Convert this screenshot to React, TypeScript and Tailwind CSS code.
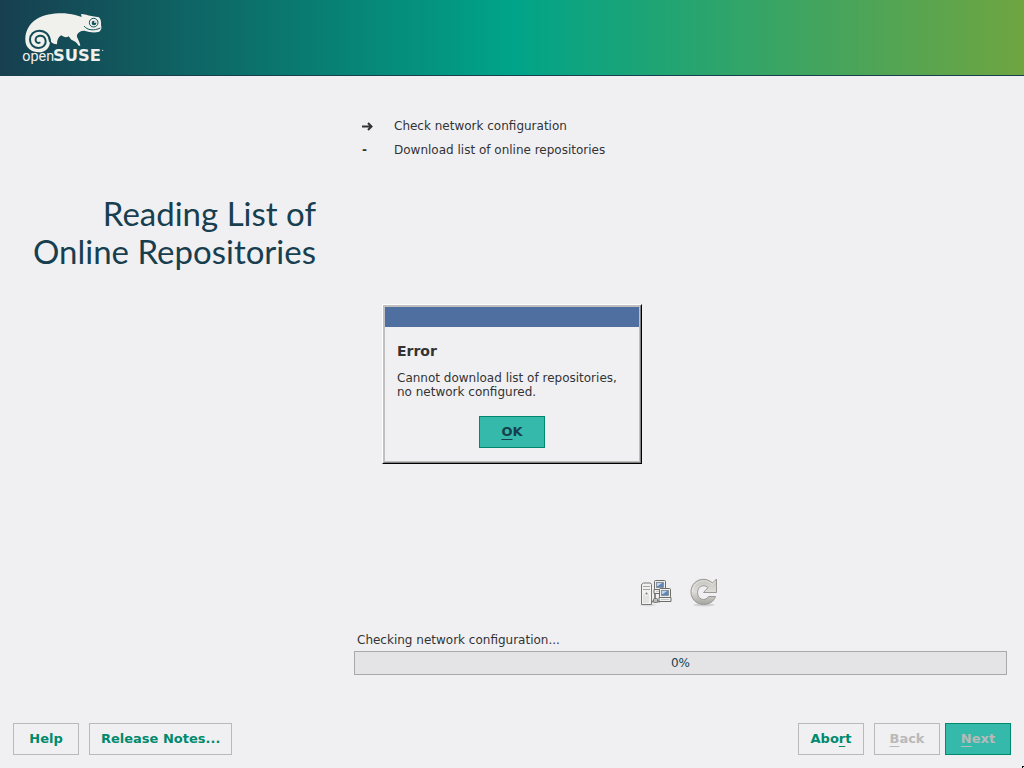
import React from "react";

const baseButton =
  "flex h-8 min-w-[66px] items-center justify-center border px-[11px] text-[13px] leading-4 font-bold";

function Mnemonic({ children }: { children: string }) {
  return <span className="underline decoration-1 underline-offset-3 [text-decoration-skip-ink:none]">{children}</span>;
}

function Logo() {
  return (
    <svg className="h-[54px] w-[84px]" viewBox="66 36 252 162" role="img" aria-label="openSUSE">
      <path
        fill="#f0f0ec"
        d="M76 120C75 96 86 72 110 57C136 42 174 38 204 41C220 43 233 46 245 51L243 42C255 42 263 46 274 48L297 52C303 58 304 66 303 76C306 83 304 91 298 95C284 99 268 97 256 93C244 91 235 97 231 105C229 113 239 123 241 137L236 137C229 125 223 123 214 119L206 109C199 114 190 111 184 106C176 110 171 119 171 133L164 132C158 130 154 126 150 122C151 143 136 157 117 157C94 157 76 143 76 120Z"
      />
      <path
        fill="none"
        stroke="#134c57"
        strokeWidth="6"
        strokeLinecap="round"
        d="M150 124C149 104 135 92 118 92C102 92 90 104 90 119C90 134 102 144 116 144C129 144 138 134 137 123C136 112 128 106 119 107C110 108 106 114 107 121C108 127 113 130 119 128"
      />
      <circle cx="281" cy="68" r="13" fill="none" stroke="#12545b" strokeWidth="3" />
      <circle cx="282" cy="69" r="7" fill="#12545b" />
      <circle cx="285" cy="66" r="3" fill="#f0f0ec" />
      <path d="M252 78C262 91 282 93 301 84" fill="none" stroke="#12545b" strokeWidth="3" />
      <g fill="#f0f0ec">
        <text x="67" y="184" fontFamily="Roboto, sans-serif" fontSize="43">open</text>
        <text x="159" y="184" fontFamily="'DejaVu Sans', sans-serif" fontWeight="700" fontSize="49">SUSE</text>
        <circle cx="308" cy="151" r="2" />
      </g>
    </svg>
  );
}

function Computer({ x, y }: { x: number; y: number }) {
  return (
    <g transform={`translate(${x} ${y})`}>
      <rect x="1.500" y=".5" width="11" height="9" rx="1" fill="#eeeeec" stroke="#6b6d69" />
      <rect x="3.500" y="2.500" width="7" height="5" fill="#5f86b8" stroke="#7d8288" strokeWidth=".7" />
      <path d="M4 3h5l-4 3H4z" fill="#c3d4e8" />
      <path d="M1 9.500H13V13.500H1z" fill="#f2f2f0" stroke="#6b6d69" />
      <path d="M3 11.500h8" stroke="#c4c4c2" />
    </g>
  );
}

function NetworkIcon() {
  return (
    <svg className="size-8" viewBox="0 0 32 32" aria-hidden="true">
      <ellipse cx="8" cy="29" rx="8" ry="1.500" fill="#000" opacity=".08" />
      <path d="M11 25.500h9M15 17v8" stroke="#8a8a88" strokeWidth="2" />
      <path d="M1.500 8.500l2-1.500h7l1 1.500v20h-10z" fill="#f2f2f0" stroke="#777975" />
      <path d="M3 10.500h7M3 13.500h7" stroke="#a5a5a2" />
      <path d="M4 18v9M6 20v7M8 18v9" stroke="#d4d4d2" />
      <circle cx="6.500" cy="17.500" r="1" fill="#777" />
      <Computer x={13} y={4} />
      <Computer x={18} y={12} />
      <rect x="13.500" y="22.500" width="4" height="4" rx="1" fill="#bbb" stroke="#777" />
    </svg>
  );
}

function RefreshIcon() {
  return (
    <svg className="size-8" viewBox="0 0 32 32" aria-hidden="true">
      <defs>
        <linearGradient id="arrow" x1="0" y1="0" x2="0" y2="1">
          <stop offset="0" stopColor="#c4c3be" />
          <stop offset=".5" stopColor="#dddcd8" />
          <stop offset="1" stopColor="#a4a39e" />
        </linearGradient>
      </defs>
      <ellipse cx="16" cy="29" rx="11" ry="1.500" fill="#000" opacity=".12" />
      <path
        d="M28.500 3V16.500H15.500L20 11.500C15 7.500 9.500 11 9.500 16.500C9.500 23.500 17 26 20.500 20.500H27.500C25.500 26 21 28.500 15.500 28.500C8.500 28.500 3 23 3 16C3 4 16.500 -.5 24.500 7Z"
        fill="url(#arrow)"
        stroke="#9a9995"
      />
      <path d="M4.500 16C4.500 6 16.500 1 24.500 8.500L27.500 5" fill="none" stroke="#fff" opacity=".45" />
    </svg>
  );
}

function Steps() {
  return (
    <ul className="flex flex-col pl-2">
      <li className="flex h-6 items-center">
        <span className="w-8 pt-px">
          <svg className="h-[9px] w-[11px]" viewBox="0 0 11 9" aria-hidden="true">
            <path d="M0 4.500H9M6 1L9.500 4.500L6 8" fill="none" stroke="#333" strokeWidth="2" />
          </svg>
        </span>
        Check network configuration
      </li>
      <li className="flex h-6 items-center">
        <span className="w-8 font-bold">-</span>
        Download list of online repositories
      </li>
    </ul>
  );
}

function ErrorDialog() {
  return (
    <div className="pointer-events-none fixed inset-0 flex items-center justify-center">
      <div
        role="alertdialog"
        aria-labelledby="error-title"
        aria-describedby="error-message"
        className="pointer-events-auto min-w-[260px] border border-t-white border-r-black border-b-black border-l-white bg-[#f0f0f3]"
      >
        <div className="border border-t-[#c0c0c0] border-r-[#808080] border-b-[#808080] border-l-[#c0c0c0]">
          <div className="border border-[#c0c0c0]">
            <div className="h-5 bg-[#4f6fa0]" />
            <div className="flex flex-col px-3 pt-4 pb-[13px]">
              <h2 id="error-title" className="text-[14px] leading-4 font-bold">Error</h2>
              <p id="error-message" className="mt-3 leading-[14px]">
                Cannot download list of repositories,
                <br />
                no network configured.
              </p>
              <button type="button" className={`${baseButton} mt-[17px] self-center border-[#008a6d] bg-[#35b9ab] text-[#173f4f]`}>
                <span><Mnemonic>O</Mnemonic>K</span>
              </button>
            </div>
          </div>
        </div>
      </div>
    </div>
  );
}

export default function App() {
  return (
    <div className="flex min-h-screen flex-col bg-[#f0f0f3] font-['DejaVu_Sans',sans-serif] text-[12px] text-[#333333]">
      <header className="flex h-19 items-start border-b border-[#173f4f] bg-[linear-gradient(to_right,#173f4f,#00a489_50%,#6fa541)] pt-3 pl-[22px]">
        <Logo />
      </header>
      <main className="flex flex-1 pr-[17px]">
        <div className="w-[354px] shrink-0 pt-[118px] pr-[38px] text-right">
          <h1 className="font-['Lato',sans-serif] text-[33px] leading-[38px] text-[#173f4f]">
            Reading List of
            <br />
            Online Repositories
          </h1>
        </div>
        <section className="flex flex-1 flex-col pt-[38px]">
          <Steps />
          <div className="mt-auto flex items-center justify-center gap-4 pr-px">
            <NetworkIcon />
            <RefreshIcon />
          </div>
          <div id="progress-label" className="mt-6 pl-[3px] leading-4">Checking network configuration...</div>
          <div
            role="progressbar"
            aria-labelledby="progress-label"
            aria-valuemin={0}
            aria-valuemax={100}
            aria-valuenow={0}
            className="mt-[3px] flex h-6 items-center justify-center border border-[#a9a9a9] bg-[#e4e4e6] text-[#173f4f]"
          >
            0%
          </div>
        </section>
      </main>
      <footer className="flex px-[13px] pt-12 pb-[13px]">
        <button type="button" className={`${baseButton} border-[#b9b9b9] text-[#008a6d]`}>Help</button>
        <button type="button" className={`${baseButton} ml-[10px] border-[#b9b9b9] text-[#008a6d]`}>Release Notes...</button>
        <button type="button" className={`${baseButton} ml-auto border-[#b9b9b9] text-[#008a6d]`}>
          <span>Abo<Mnemonic>r</Mnemonic>t</span>
        </button>
        <button type="button" disabled className={`${baseButton} ml-[10px] border-[#b9b9b9] text-[#b9b9b9]`}>
          <span><Mnemonic>B</Mnemonic>ack</span>
        </button>
        <button type="button" disabled className={`${baseButton} ml-[5px] border-[#008a6d] bg-[#35b9ab] text-[#b9b9b9]`}>
          <span><Mnemonic>N</Mnemonic>ext</span>
        </button>
      </footer>
      <ErrorDialog />
      <div className="fixed right-0 bottom-0 size-[2px] border-t border-l border-black" aria-hidden="true" />
    </div>
  );
}
